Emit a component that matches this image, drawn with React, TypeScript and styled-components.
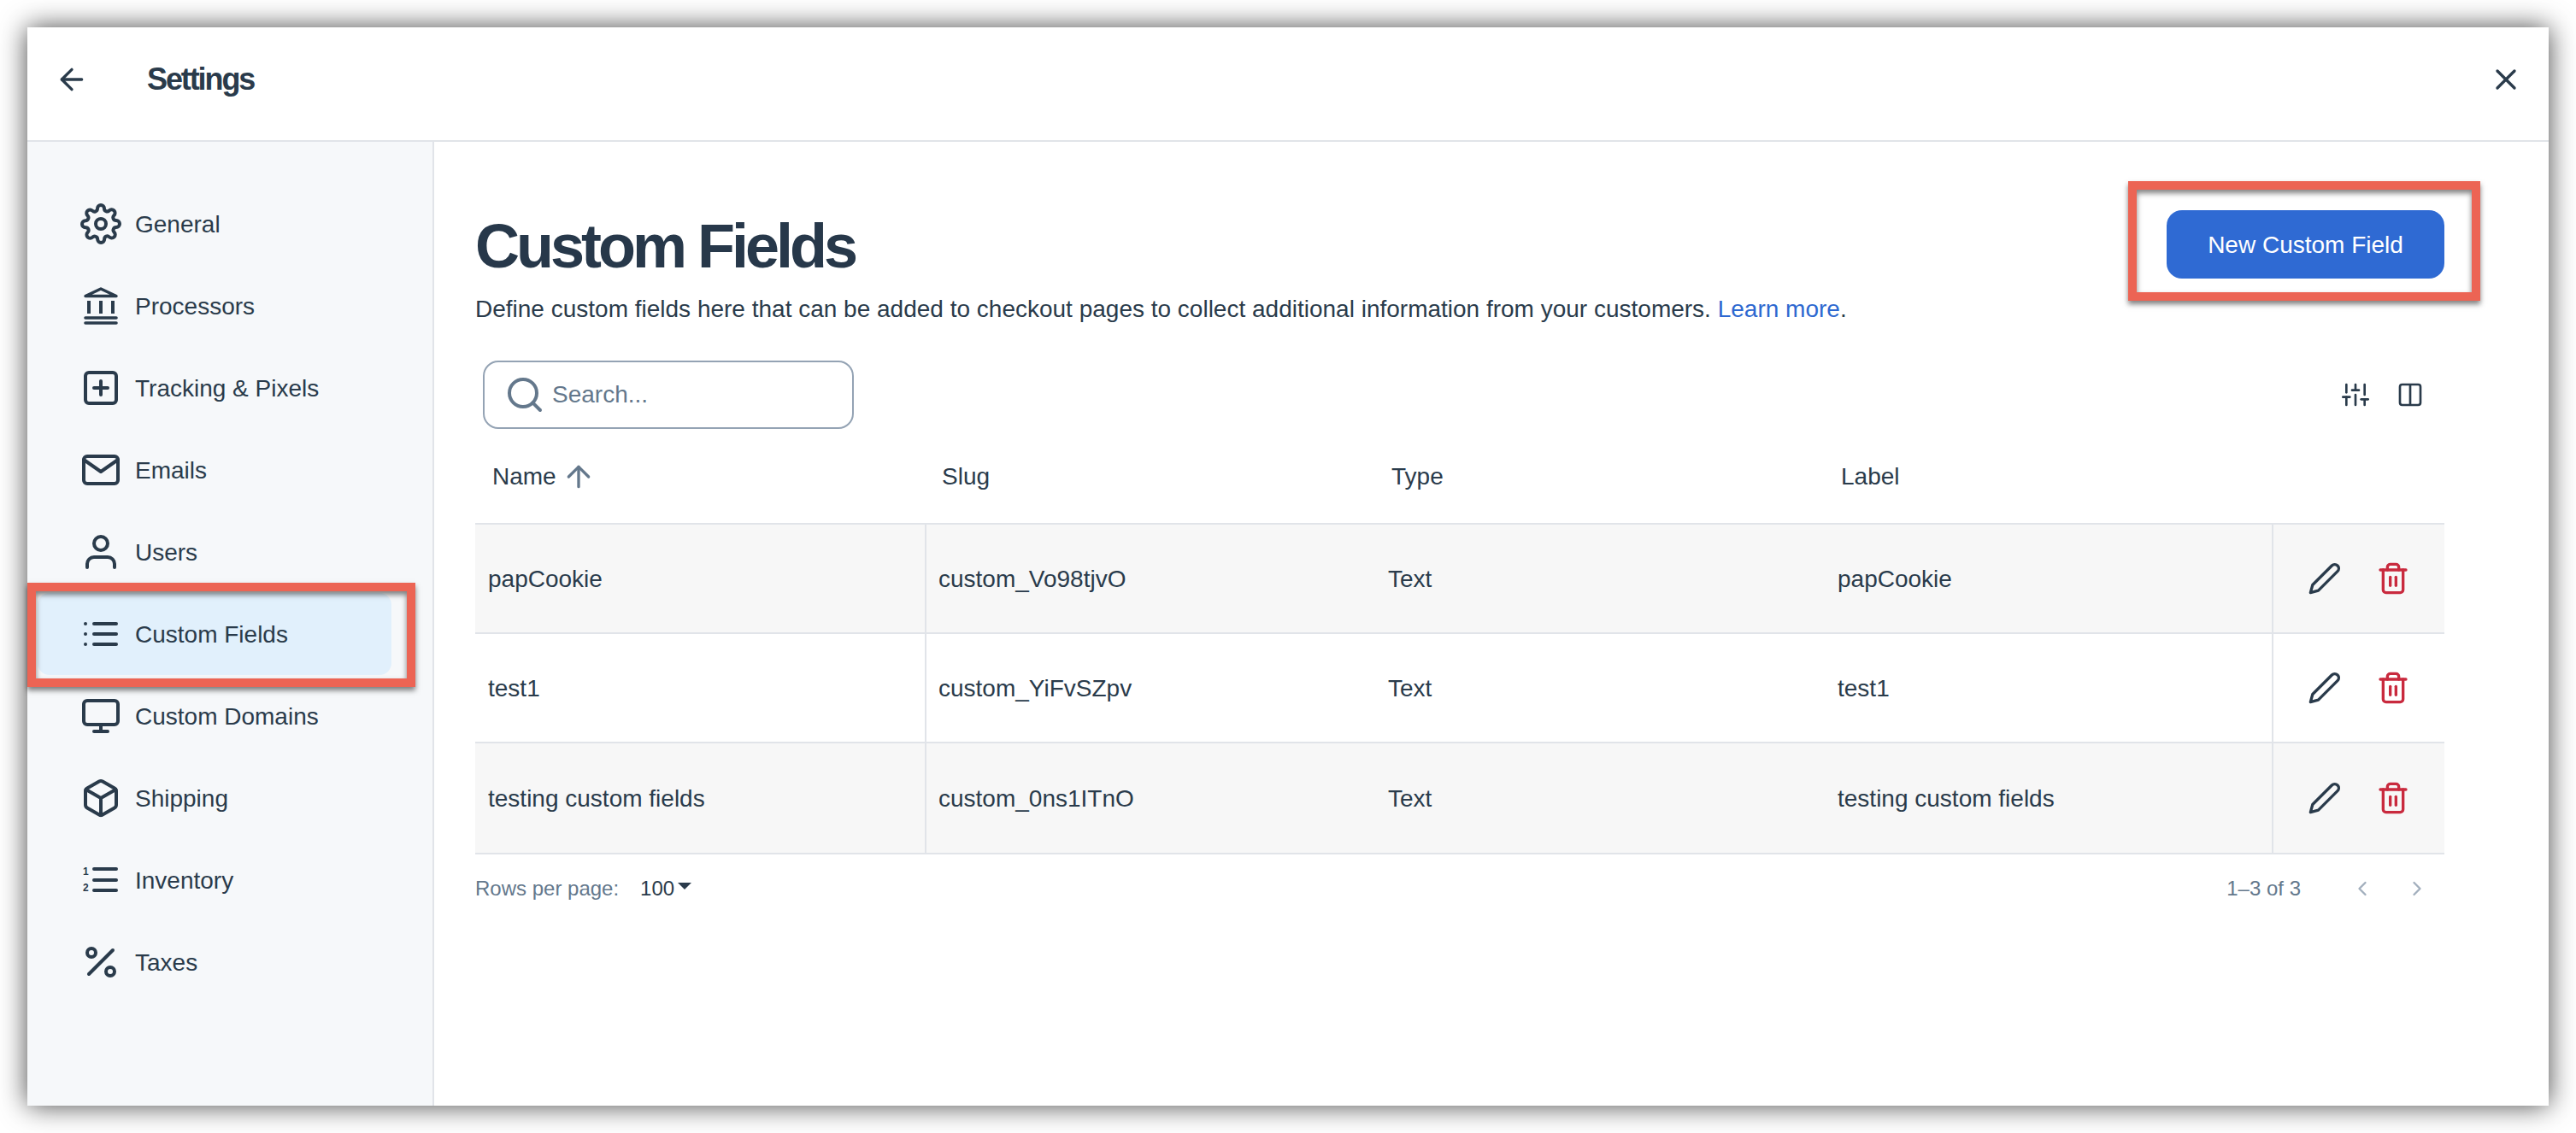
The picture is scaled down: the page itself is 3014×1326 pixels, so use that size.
import styled, { createGlobalStyle } from 'styled-components';
import {
  FiArrowLeft,
  FiArrowUp,
  FiBox,
  FiChevronLeft,
  FiChevronRight,
  FiColumns,
  FiEdit2,
  FiList,
  FiMail,
  FiMonitor,
  FiPercent,
  FiPlusSquare,
  FiSearch,
  FiSettings,
  FiSliders,
  FiTrash2,
  FiUser,
  FiX,
} from 'react-icons/fi';

const ink = '#2a3b4b';
const line = '#e1e4e9';

const GlobalStyle = createGlobalStyle`
  html, body {
    margin: 0;
    padding: 0;
    background: #fff;
    overflow: hidden;
  }
  * {
    box-sizing: border-box;
  }
`;

const Page = styled.div`
  width: 3014px;
  height: 1326px;
  padding: 32px;
  font-family: 'Liberation Sans', Arial, sans-serif;
  font-size: 28px;
  color: ${ink};
`;

const Window = styled.div`
  width: 2950px;
  height: 1262px;
  display: flex;
  flex-direction: column;
  background: #fff;
  box-shadow: 0 0 30px rgba(0, 0, 0, 0.72);
`;

const TopBar = styled.header`
  flex: 0 0 134px;
  display: flex;
  align-items: center;
  padding: 0 30px 10px 32px;
  border-bottom: 2px solid ${line};
`;

const TopTitle = styled.div`
  margin-left: 68px;
  font-size: 36px;
  font-weight: 700;
  letter-spacing: -2.1px;
`;

const CloseButton = styled.div`
  margin-left: auto;
  display: flex;
`;

const Body = styled.div`
  flex: 1;
  display: flex;
  min-height: 0;
`;

const Sidebar = styled.nav`
  flex: 0 0 476px;
  padding: 48px 0 0 12px;
  background: #f6f8fa;
  border-right: 2px solid ${line};
`;

const NavItem = styled.div<{ $active?: boolean }>`
  position: relative;
  width: 414px;
  height: 96px;
  display: flex;
  align-items: center;
  gap: 16px;
  padding-left: 50px;
  border-radius: 14px;
  background: ${(p) => (p.$active ? '#e1f0fc' : 'transparent')};
`;

const NavLabel = styled.span`
  padding-top: 2px;
`;

const Callout = styled.div`
  position: absolute;
  border: 10px solid #ec6454;
  box-shadow: 0 4px 6px rgba(0, 0, 0, 0.5), inset 0 4px 6px rgba(0, 0, 0, 0.5);
  pointer-events: none;
`;

const NavCallout = styled(Callout)`
  left: -12px;
  top: -12px;
  width: 454px;
  height: 122px;
`;

const ButtonCallout = styled(Callout)`
  left: -45px;
  top: -34px;
  width: 412px;
  height: 140px;
`;

const Main = styled.main`
  flex: 1;
  padding: 80px 122px 0 48px;
`;

const TitleRow = styled.div`
  display: flex;
  align-items: center;
  justify-content: space-between;
  height: 80px;
`;

const Title = styled.h1`
  margin: 4px 0 0;
  font-size: 72px;
  font-weight: 700;
  letter-spacing: -4px;
  color: #27384a;
`;

const NewButton = styled.div`
  position: relative;
  width: 325px;
  height: 80px;
  display: flex;
  align-items: center;
  justify-content: center;
  padding-top: 2px;
  border-radius: 18px;
  background: #2f6ad3;
  color: #fff;
`;

const Description = styled.p`
  margin: 18px 0 0;
  line-height: 36px;
`;

const LearnMore = styled.span`
  color: #2d68d0;
`;

const Toolbar = styled.div`
  margin-top: 42px;
  height: 80px;
  display: flex;
  align-items: center;
  justify-content: space-between;
  padding: 0 24px 0 9px;
`;

const SearchBox = styled.div`
  width: 434px;
  height: 80px;
  display: flex;
  align-items: center;
  gap: 8px;
  padding-left: 23px;
  border: 2px solid #94a3b4;
  border-radius: 18px;
  color: #64788c;
`;

const ToolIcons = styled.div`
  display: flex;
  align-items: center;
  gap: 32px;
`;

const columns = '526px 526px 526px 524px 202px';

const HeadRow = styled.div`
  height: 110px;
  display: grid;
  grid-template-columns: ${columns};
  align-items: center;
`;

const HeadCell = styled.div`
  display: flex;
  align-items: center;
  gap: 6px;
  padding: 2px 0 0 20px;
`;

const SortIcon = styled.span`
  display: flex;
  color: #64788c;
`;

const Rows = styled.div`
  border-top: 2px solid ${line};
`;

const Row = styled.div<{ $shaded?: boolean }>`
  height: 128px;
  display: grid;
  grid-template-columns: ${columns};
  background: ${(p) => (p.$shaded ? '#f7f7f7' : '#fff')};
  border-bottom: 2px solid ${line};

  &:last-child {
    height: 130px;
  }
`;

const Cell = styled.div<{ $first?: boolean; $divided?: boolean }>`
  display: flex;
  align-items: center;
  padding-top: 2px;
  padding-left: ${(p) => (p.$first ? '15px' : p.$divided ? '14px' : '16px')};
  border-left: ${(p) => (p.$divided ? `2px solid ${line}` : 'none')};
`;

const ActionCell = styled.div`
  display: flex;
  align-items: center;
  gap: 40px;
  padding-left: 40px;
  border-left: 2px solid ${line};
`;

const TrashIcon = styled.span`
  display: flex;
  color: #c92a3e;
`;

const Footer = styled.div`
  height: 80px;
  display: flex;
  align-items: center;
  justify-content: space-between;
  padding-right: 18px;
  font-size: 24px;
  color: #64788c;
`;

const RowsPerPage = styled.div`
  display: flex;
  align-items: center;
`;

const PageSize = styled.span`
  margin-left: 25px;
  color: ${ink};
`;

const Caret = styled.span`
  width: 0;
  height: 0;
  margin: 0 0 6px 4px;
  border-left: 8px solid transparent;
  border-right: 8px solid transparent;
  border-top: 8px solid ${ink};
`;

const Pager = styled.div`
  display: flex;
  align-items: center;
  gap: 36px;
  color: #a2afbd;
`;

const PageCount = styled.span`
  margin-right: 22px;
  color: #64788c;
`;

const BankIcon = () => (
  <svg width='48' height='48' viewBox='0 0 48 48' fill='none' stroke='currentColor' strokeLinecap='round'>
    <path d='M6 12.5 24 4l18 8.5z' strokeWidth='3.5' strokeLinejoin='round' />
    <path d='M10 18v15M24 18v15M38 18v15' strokeWidth='4' strokeLinecap='butt' />
    <path d='M6 38h36M6 44h36' strokeWidth='3.6' />
  </svg>
);

const NumberedListIcon = () => (
  <svg width='48' height='48' viewBox='0 0 48 48' fill='none' stroke='currentColor' strokeLinecap='round'>
    <path d='M16 11h26M16 24h26M16 36h26' strokeWidth='4' />
    <text x='3' y='18' fill='currentColor' stroke='none' fontSize='12' fontWeight='700' fontFamily='Liberation Sans, Arial, sans-serif'>
      1
    </text>
    <text x='3' y='37' fill='currentColor' stroke='none' fontSize='12' fontWeight='700' fontFamily='Liberation Sans, Arial, sans-serif'>
      2
    </text>
  </svg>
);

const navItems = [
  { label: 'General', icon: <FiSettings size={48} /> },
  { label: 'Processors', icon: <BankIcon /> },
  { label: 'Tracking & Pixels', icon: <FiPlusSquare size={48} /> },
  { label: 'Emails', icon: <FiMail size={48} /> },
  { label: 'Users', icon: <FiUser size={48} /> },
  { label: 'Custom Fields', icon: <FiList size={48} />, active: true },
  { label: 'Custom Domains', icon: <FiMonitor size={48} /> },
  { label: 'Shipping', icon: <FiBox size={48} /> },
  { label: 'Inventory', icon: <NumberedListIcon /> },
  { label: 'Taxes', icon: <FiPercent size={48} /> },
];

const fields = [
  { name: 'papCookie', slug: 'custom_Vo98tjvO', type: 'Text', label: 'papCookie' },
  { name: 'test1', slug: 'custom_YiFvSZpv', type: 'Text', label: 'test1' },
  { name: 'testing custom fields', slug: 'custom_0ns1ITnO', type: 'Text', label: 'testing custom fields' },
];

const App = () => {
  return (
    <Page>
      <GlobalStyle />
      <Window>
        <TopBar>
          <FiArrowLeft size={40} />
          <TopTitle>Settings</TopTitle>
          <CloseButton>
            <FiX size={40} />
          </CloseButton>
        </TopBar>
        <Body>
          <Sidebar>
            {navItems.map((item) => (
              <NavItem key={item.label} $active={item.active}>
                {item.icon}
                <NavLabel>{item.label}</NavLabel>
                {item.active && <NavCallout />}
              </NavItem>
            ))}
          </Sidebar>
          <Main>
            <TitleRow>
              <Title>Custom Fields</Title>
              <NewButton>
                New Custom Field
                <ButtonCallout />
              </NewButton>
            </TitleRow>
            <Description>
              Define custom fields here that can be added to checkout pages to collect additional information from your
              customers. <LearnMore>Learn more</LearnMore>.
            </Description>
            <Toolbar>
              <SearchBox>
                <FiSearch size={48} />
                Search...
              </SearchBox>
              <ToolIcons>
                <FiSliders size={32} />
                <FiColumns size={32} />
              </ToolIcons>
            </Toolbar>
            <HeadRow>
              <HeadCell>
                Name
                <SortIcon>
                  <FiArrowUp size={40} />
                </SortIcon>
              </HeadCell>
              <HeadCell>Slug</HeadCell>
              <HeadCell>Type</HeadCell>
              <HeadCell>Label</HeadCell>
            </HeadRow>
            <Rows>
              {fields.map((field, i) => (
                <Row key={field.slug} $shaded={i % 2 === 0}>
                  <Cell $first>{field.name}</Cell>
                  <Cell $divided>{field.slug}</Cell>
                  <Cell>{field.type}</Cell>
                  <Cell>{field.label}</Cell>
                  <ActionCell>
                    <FiEdit2 size={40} />
                    <TrashIcon>
                      <FiTrash2 size={40} />
                    </TrashIcon>
                  </ActionCell>
                </Row>
              ))}
            </Rows>
            <Footer>
              <RowsPerPage>
                Rows per page:
                <PageSize>100</PageSize>
                <Caret />
              </RowsPerPage>
              <Pager>
                <PageCount>1–3 of 3</PageCount>
                <FiChevronLeft size={28} />
                <FiChevronRight size={28} />
              </Pager>
            </Footer>
          </Main>
        </Body>
      </Window>
    </Page>
  );
};

export default App;
